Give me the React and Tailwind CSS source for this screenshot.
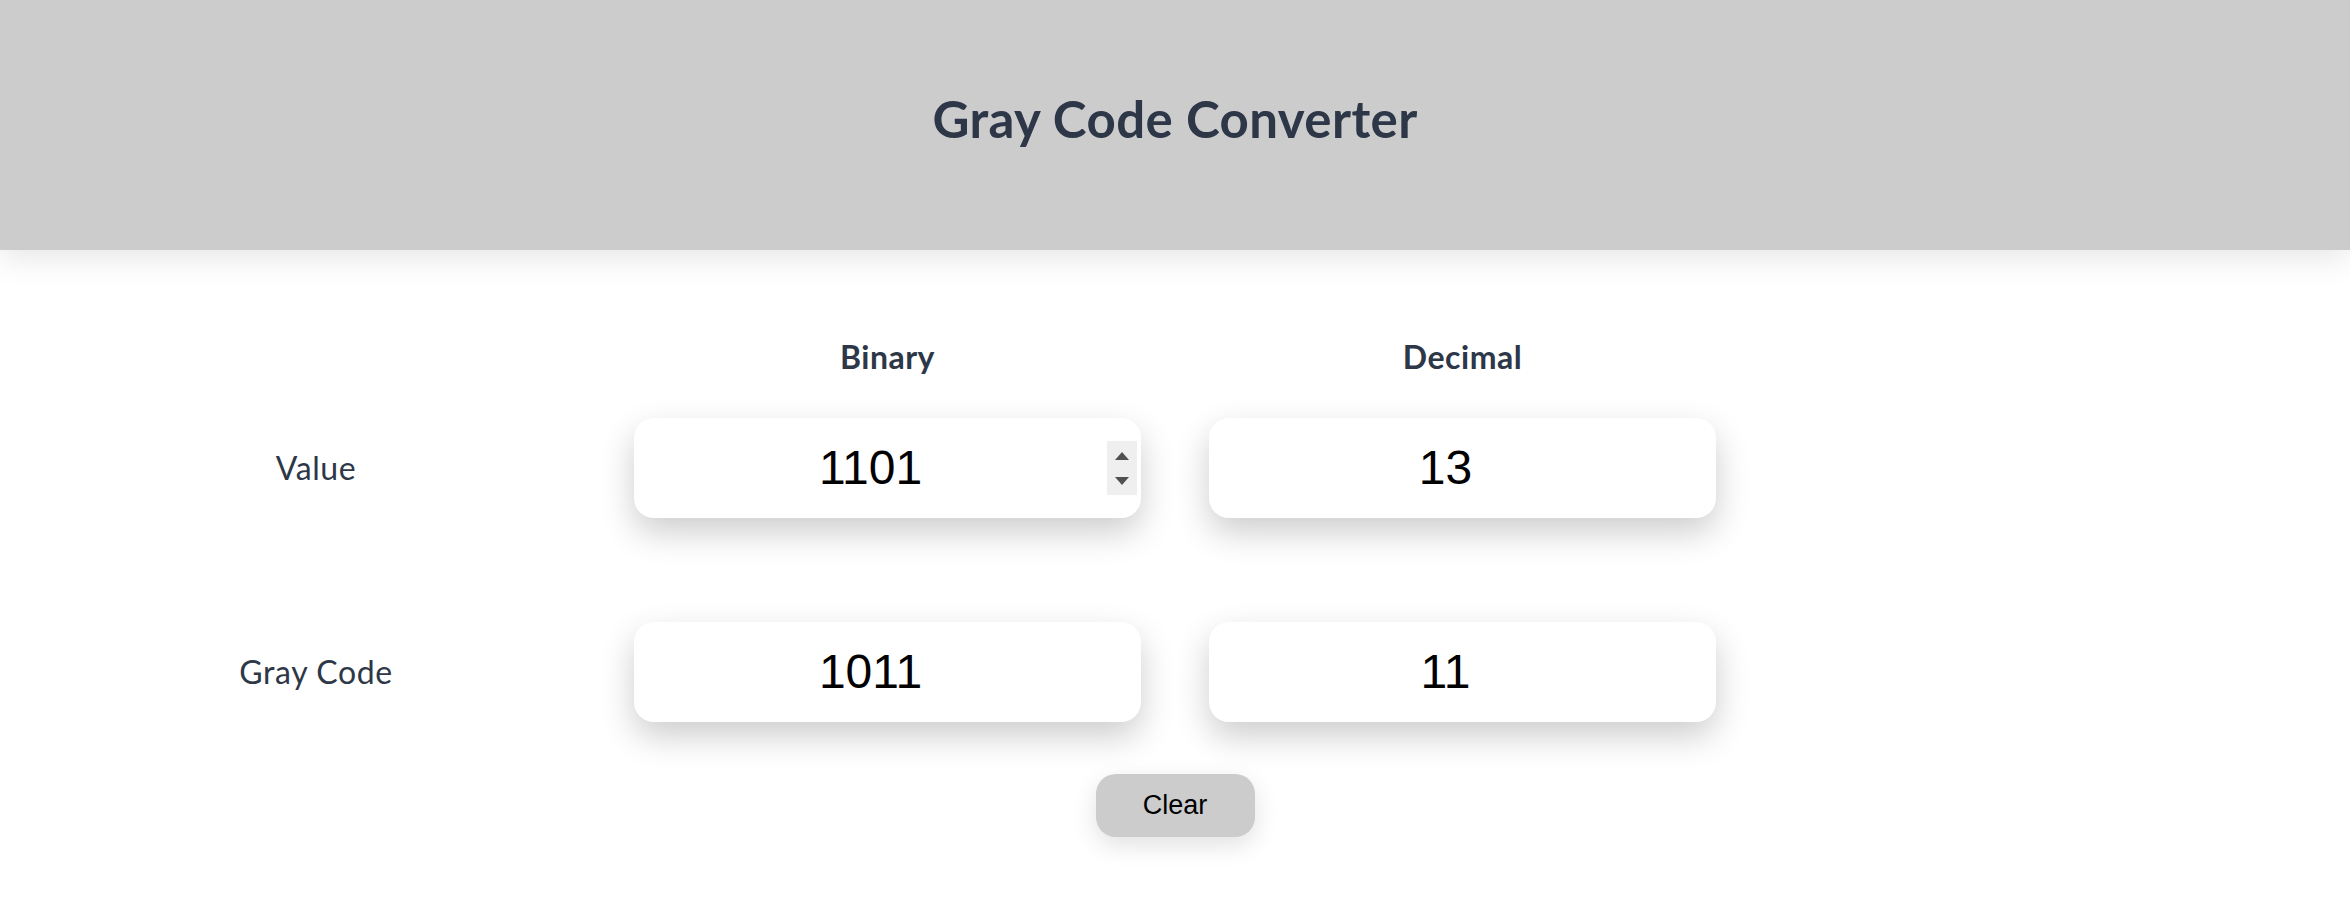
import React from "react";

function Spinner({ visible }) {
  return (
    <div className={"flex h-[54px] w-[30px] flex-col items-center justify-center gap-[17px] " + (visible ? "bg-[#efefef]" : "")}>
      {visible && (
        <>
          <svg width="14" height="8" viewBox="0 0 14 8"><path d="M7 0 L14 8 L0 8 Z" fill="#505050" /></svg>
          <svg width="14" height="8" viewBox="0 0 14 8"><path d="M0 0 L14 0 L7 8 Z" fill="#505050" /></svg>
        </>
      )}
    </div>
  );
}

function Box({ value, spinner }) {
  return (
    <div className="mx-auto flex h-[100px] w-[507px] items-center rounded-[20px] bg-white pr-[4px] shadow-[0_14px_34px_rgba(0,0,0,0.2)]">
      <div className="flex-1 text-center text-[48px] leading-none text-black [font-family:'Liberation_Sans',Arial,sans-serif]">
        {value}
      </div>
      <Spinner visible={spinner} />
    </div>
  );
}

export default function App() {
  return (
    <div className="min-h-[902px] w-full bg-white [font-family:Lato,'Noto_Sans',sans-serif] text-[#2d3748]">
      <header className="flex h-[250px] items-center justify-center bg-[#cccccc] pb-[14px] shadow-[0_8px_30px_rgba(0,0,0,0.1)]">
        <h1 className="text-[51px] font-bold leading-none tracking-[0.4px]">Gray Code Converter</h1>
      </header>

      <main className="px-[25px]">
        <div className="mt-[89px] grid grid-cols-4">
          <div />
          <div className="text-center text-[32px] font-bold leading-[36px] tracking-[0.5px]">Binary</div>
          <div className="text-center text-[32px] font-bold leading-[36px] tracking-[0.5px]">Decimal</div>
          <div />
        </div>

        <div className="mt-[43px] grid grid-cols-4 items-center">
          <div className="pl-[7px] text-center text-[32px] leading-[36px] tracking-[0.6px]">Value</div>
          <Box value="1101" spinner />
          <Box value="13" />
          <div />
        </div>

        <div className="mt-[104px] grid grid-cols-4 items-center">
          <div className="pl-[7px] text-center text-[32px] leading-[36px] tracking-[0.6px]">Gray Code</div>
          <Box value="1011" />
          <Box value="11" />
          <div />
        </div>

        <div className="mt-[52px] flex justify-center">
          <button className="h-[63px] w-[159px] rounded-[20px] bg-[#cccccc] text-[27px] text-black shadow-[0_8px_25px_rgba(0,0,0,0.12)] [font-family:'Liberation_Sans',Arial,sans-serif]">
            Clear
          </button>
        </div>
      </main>
    </div>
  );
}
